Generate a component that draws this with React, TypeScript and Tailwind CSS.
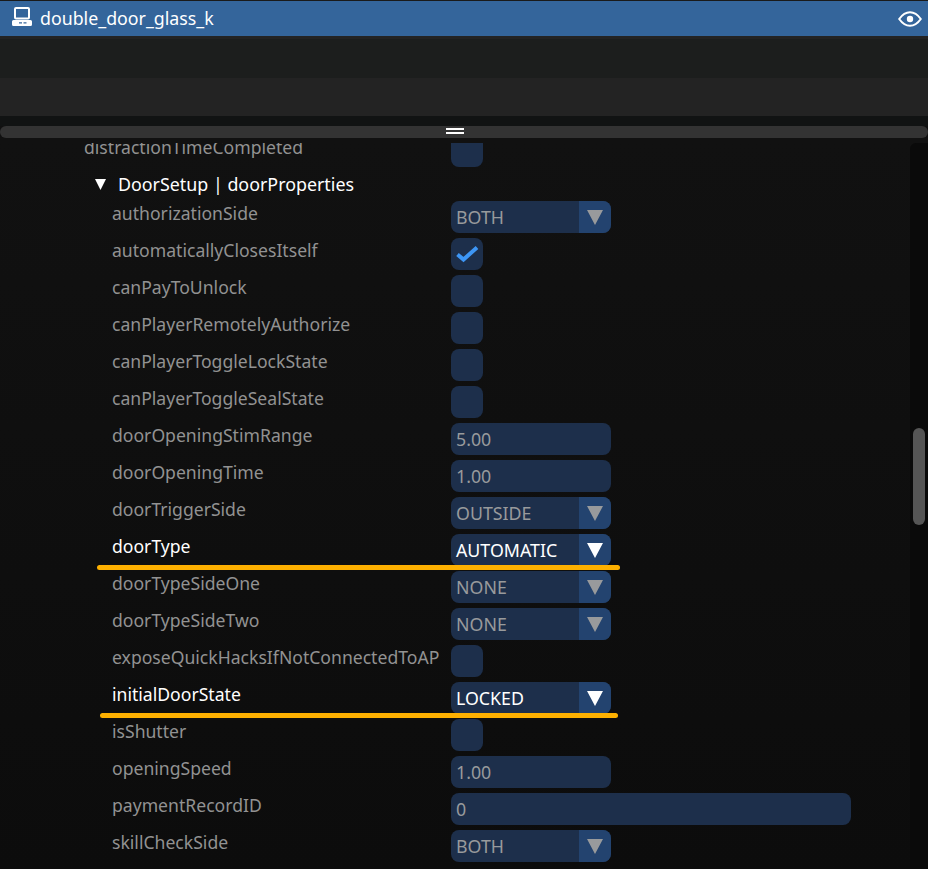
import React from 'react';

type Row =
  | { label: string; kind: 'select'; value: string; active?: boolean }
  | { label: string; kind: 'check'; checked?: boolean }
  | { label: string; kind: 'number'; value: string; wide?: boolean };

const ROWS: Row[] = [
  { label: 'authorizationSide', kind: 'select', value: 'BOTH' },
  { label: 'automaticallyClosesItself', kind: 'check', checked: true },
  { label: 'canPayToUnlock', kind: 'check' },
  { label: 'canPlayerRemotelyAuthorize', kind: 'check' },
  { label: 'canPlayerToggleLockState', kind: 'check' },
  { label: 'canPlayerToggleSealState', kind: 'check' },
  { label: 'doorOpeningStimRange', kind: 'number', value: '5.00' },
  { label: 'doorOpeningTime', kind: 'number', value: '1.00' },
  { label: 'doorTriggerSide', kind: 'select', value: 'OUTSIDE' },
  { label: 'doorType', kind: 'select', value: 'AUTOMATIC', active: true },
  { label: 'doorTypeSideOne', kind: 'select', value: 'NONE' },
  { label: 'doorTypeSideTwo', kind: 'select', value: 'NONE' },
  { label: 'exposeQuickHacksIfNotConnectedToAP', kind: 'check' },
  { label: 'initialDoorState', kind: 'select', value: 'LOCKED', active: true },
  { label: 'isShutter', kind: 'check' },
  { label: 'openingSpeed', kind: 'number', value: '1.00' },
  { label: 'paymentRecordID', kind: 'number', value: '0', wide: true },
  { label: 'skillCheckSide', kind: 'select', value: 'BOTH' },
];

function Control({ row }: { row: Row }) {
  if (row.kind === 'check') {
    return (
      <div className="w-8 h-8 rounded-lg bg-[#1d2f4b] flex items-center justify-center">
        {row.checked && (
          <svg width="24" height="20" viewBox="0 0 24 20">
            <path d="M2.5 10.5 L8.5 15.5 L22 3.5" fill="none" stroke="#3d96f5" strokeWidth="4" />
          </svg>
        )}
      </div>
    );
  }
  if (row.kind === 'number') {
    return (
      <div className={`${row.wide ? 'w-[400px]' : 'w-40'} h-8 rounded-lg bg-[#1d2f4b] px-[5px] pt-[1px] text-[17.8px] text-[#989a9c] leading-[30px]`}>
        {row.value}
      </div>
    );
  }
  return (
    <div className="w-40 h-8 rounded-lg bg-[#1d2f4b] flex overflow-hidden">
      <div className={`flex-1 px-[5px] pt-[1px] text-[17.8px] leading-[30px] ${row.active ? 'text-white' : 'text-[#989a9c]'}`}>
        {row.value}
      </div>
      <div className="w-8 bg-[#23436f] flex items-center justify-center">
        <svg width="16" height="15" viewBox="0 0 16 15">
          <polygon points="0,0 16,0 8,15" fill={row.active ? '#ffffff' : '#989a9c'} />
        </svg>
      </div>
    </div>
  );
}

function PropertyRow({ row }: { row: Row }) {
  const active = row.kind === 'select' && row.active;
  return (
    <div className="flex h-8">
      <div className={`w-[451px] pl-[112px] leading-[24px] whitespace-nowrap ${active ? 'text-white' : 'text-[#929292]'}`}>
        {row.label}
      </div>
      <Control row={row} />
    </div>
  );
}

export default function App() {
  return (
    <div className="relative w-[928px] h-[869px] overflow-hidden bg-[#101010] flex flex-col text-[17.6px] font-['Noto_Sans',sans-serif]">
      {/* title bar */}
      <div className="h-px bg-[#1a1a1a]" />
      <div className="h-[35px] bg-[#34659b] flex items-center justify-between pl-3 pr-[6px] text-white">
        <div className="flex items-center gap-2">
          <svg className="mb-[4px]" width="20" height="19" viewBox="0 0 20 19" fill="none">
            <rect x="3" y="1" width="14" height="10.5" rx="1" stroke="#fff" strokeWidth="2" />
            <path fillRule="evenodd" clipRule="evenodd" d="M1.5 13 H18.5 Q20 13 20 14.5 V17.5 Q20 19 18.5 19 H1.5 Q0 19 0 17.5 V14.5 Q0 13 1.5 13 Z M7 15.3 V16.5 H10 V15.3 Z M11.5 15.3 V16.5 H14.5 V15.3 Z" fill="#fff" />
          </svg>
          <span className="text-[17.8px]">double_door_glass_k</span>
        </div>
        <svg width="24" height="16" viewBox="0 0 24 16" fill="none">
          <path d="M1.2 8 C5 2.6 8.5 1.2 12 1.2 C15.5 1.2 19 2.6 22.8 8 C19 13.4 15.5 14.8 12 14.8 C8.5 14.8 5 13.4 1.2 8 Z" stroke="#fff" strokeWidth="2" />
          <circle cx="12" cy="8" r="3.2" fill="#fff" />
        </svg>
      </div>

      {/* empty bands */}
      <div className="h-[3px] bg-[#232323]" />
      <div className="h-[39px] bg-[#1c1e1d]" />
      <div className="h-[38px] bg-[#232323]" />
      <div className="h-[10px] bg-[#111313]" />

      {/* splitter */}
      <div className="h-3 shrink-0 rounded-md bg-[#333333] flex flex-col gap-[2px] pt-[2px] pl-[446px]">
        <div className="w-[18px] h-[2px] bg-white" />
        <div className="w-[18px] h-[2px] bg-white" />
      </div>

      {/* property list */}
      <div className="flex-1 min-h-0 pt-[5px] flex overflow-hidden bg-gradient-to-b from-[#111111] to-[#0c0c0c]">
        <div className="flex-1 min-w-0 overflow-hidden">
          <div className="flex flex-col gap-[5px] mt-[-8px]">
            <div className="flex h-8">
              <div className="w-[451px] pl-[84px] leading-[24px] text-[#929292] whitespace-nowrap">distractionTimeCompleted</div>
              <div className="w-8 h-8 rounded-lg bg-[#1d2f4b]" />
            </div>
            <div className="flex items-center h-6 pl-[95px] gap-[12px] text-[17.85px] text-white">
              <svg width="11" height="11" viewBox="0 0 11 11">
                <polygon points="0,0 11,0 5.5,11" fill="#fff" />
              </svg>
              <span>DoorSetup | doorProperties</span>
            </div>
            {ROWS.map((row) => (
              <PropertyRow key={row.label} row={row} />
            ))}
          </div>
        </div>
        <div className="w-[18px] bg-[#0a0a0a] rounded-tl-md shrink-0 pt-[285px] pl-[3px]">
          <div className="w-3 h-[97px] rounded-md bg-[#555555]" />
        </div>
      </div>

      {/* hand-drawn highlights */}
      <div className="absolute left-[97px] top-[565px] w-[523px] h-[5px] rounded-sm bg-[#fdb000]" />
      <div className="absolute left-[100px] top-[713px] w-[518px] h-[5px] rounded-sm bg-[#fdb000]" />
    </div>
  );
}
